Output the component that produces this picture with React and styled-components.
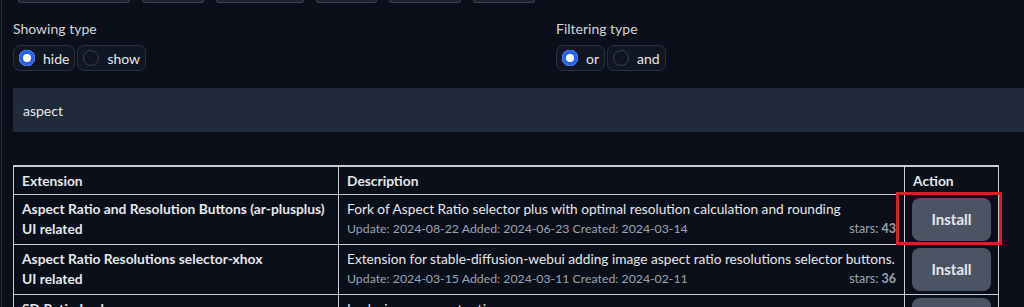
import React from "react";
import styled, { createGlobalStyle } from "styled-components";

const Global = createGlobalStyle`
  html, body { margin: 0; padding: 0; background: #0b0f19; overflow: hidden; }
  body { font-family: Lato, "Noto Sans", sans-serif; color: #e5e7eb; }
  * { box-sizing: border-box; }
`;

const Page = styled.div`
  width: 1024px;
  height: 307px;
  overflow: hidden;
  background: #0b0f19;
  margin-left: 1px;
  border-left: 1px solid #262b36;
  padding-left: 11px;
`;

const Strip = styled.div`
  display: flex;
  height: 3px;
  padding-left: 5px;
  gap: 12px;
`;

const StripButton = styled.div`
  width: ${(p) => p.$w}px;
  height: 3px;
  border: 1px solid #3a4150;
  border-top: none;
  border-radius: 0 0 4px 4px;
  background: #1c222e;
`;

const Filters = styled.div`
  display: grid;
  grid-template-columns: 543px 1fr;
  margin-top: 18px;
`;

const FilterBlock = styled.div`
  display: flex;
  flex-direction: column;
`;

const Label = styled.div`
  font-size: 14px;
  color: #d1d5db;
  line-height: 16px;
  margin-bottom: 8px;
`;

const RadioGroup = styled.div`
  display: flex;
  gap: 2px;
`;

const RadioOption = styled.label`
  display: flex;
  align-items: center;
  height: 26px;
  padding: 0 5px 0 5px;
  gap: 8px;
  border: 1px solid #293040;
  border-radius: 7px;
  background: #111623;
  font-size: 14px;
  color: #e5e7eb;
`;

const Dot = styled.span`
  width: 16px;
  height: 16px;
  border-radius: 50%;
  flex: none;
  ${(p) =>
    p.$on
      ? `background: #2563eb; box-shadow: inset 0 0 0 4px #2563eb, inset 0 0 0 8px #fff;`
      : `background: #0f1420; border: 1px solid #374151;`}
`;

const Search = styled.div`
  margin-top: 17px;
  height: 44px;
  background: #212a38;
  display: flex;
  align-items: center;
  padding-left: 10px;
  font-size: 14px;
  color: #e5e7eb;
`;

const Table = styled.table`
  margin-top: 33px;
  width: 985px;
  border-collapse: collapse;
  table-layout: fixed;
  border-top: 2px solid #c9ccd2;
  font-size: 13.8px;
`;

const Th = styled.th`
  text-align: left;
  font-weight: 700;
  height: 28px;
  padding: 0 8px;
  border: 1px solid #c9ccd2;
  color: #e5e7eb;
  width: ${(p) => p.$w}px;
`;

const Td = styled.td`
  height: 50px;
  padding: 0 8px;
  border: 1px solid #c9ccd2;
  vertical-align: middle;
  position: relative;
`;

const Name = styled.div`
  font-weight: 700;
  line-height: 20px;
  white-space: nowrap;
`;

const Desc = styled.div`
  font-size: 13.7px;
  line-height: 20px;
  white-space: nowrap;
`;

const Meta = styled.div`
  display: flex;
  justify-content: space-between;
  font-size: 12.3px;
  line-height: 20px;
  color: #9ca3af;
  white-space: nowrap;
`;

const Stars = styled.span`
  font-size: 12.5px;
  b { font-weight: 700; }
`;

const ActionTd = styled(Td)`
  padding: 0 8px 0 7px;
`;

const InstallButton = styled.button`
  width: 79px;
  height: 43px;
  border: none;
  border-radius: 8px;
  background: #4b5463;
  color: #e5e7eb;
  font-family: inherit;
  font-size: 15px;
  font-weight: 700;
  display: block;
`;

const Highlight = styled.div`
  position: absolute;
  left: -9px;
  right: -4px;
  top: -3px;
  bottom: -1px;
  border: 3px solid #d8202a;
  pointer-events: none;
`;

const rows = [
  {
    name: "Aspect Ratio and Resolution Buttons (ar-plusplus)",
    tag: "UI related",
    desc: "Fork of Aspect Ratio selector plus with optimal resolution calculation and rounding",
    meta: "Update: 2024-08-22 Added: 2024-06-23 Created: 2024-03-14",
    stars: 43,
    hl: true,
  },
  {
    name: "Aspect Ratio Resolutions selector-xhox",
    tag: "UI related",
    desc: "Extension for stable-diffusion-webui adding image aspect ratio resolutions selector buttons.",
    meta: "Update: 2024-03-15 Added: 2024-03-11 Created: 2024-02-11",
    stars: 36,
  },
  {
    name: "SD Ratio Lock",
    tag: "UI related",
    desc: "Locks image aspect ratio",
    meta: "",
    stars: 0,
  },
];

function Radio({ options, value }) {
  return (
    <RadioGroup>
      {options.map((o) => (
        <RadioOption key={o}>
          <Dot $on={o === value} />
          {o}
        </RadioOption>
      ))}
    </RadioGroup>
  );
}

export default function App() {
  return (
    <>
      <Global />
      <Page>
        <Strip>
          {[112, 62, 88, 61, 72, 62].map((w, i) => (
            <StripButton key={i} $w={w} />
          ))}
        </Strip>
        <Filters>
          <FilterBlock>
            <Label>Showing type</Label>
            <Radio options={["hide", "show"]} value="hide" />
          </FilterBlock>
          <FilterBlock>
            <Label>Filtering type</Label>
            <Radio options={["or", "and"]} value="or" />
          </FilterBlock>
        </Filters>
        <Search>aspect</Search>
        <Table>
          <thead>
            <tr>
              <Th $w={325}>Extension</Th>
              <Th $w={566}>Description</Th>
              <Th $w={94}>Action</Th>
            </tr>
          </thead>
          <tbody>
            {rows.map((r) => (
              <tr key={r.name}>
                <Td>
                  <Name>{r.name}</Name>
                  <Name>{r.tag}</Name>
                </Td>
                <Td>
                  <Desc>{r.desc}</Desc>
                  <Meta>
                    <span>{r.meta}</span>
                    <Stars>
                      stars: <b>{r.stars}</b>
                    </Stars>
                  </Meta>
                </Td>
                <ActionTd>
                  <InstallButton>Install</InstallButton>
                  {r.hl && <Highlight />}
                </ActionTd>
              </tr>
            ))}
          </tbody>
        </Table>
      </Page>
    </>
  );
}
